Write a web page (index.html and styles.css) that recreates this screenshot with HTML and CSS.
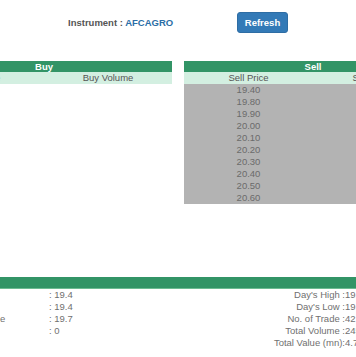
FILE: index.html
```html
<!DOCTYPE html>
<html lang="en">
<head>
    <meta charset="UTF-8">
    <title>Market Depth - AFCAGRO</title>
    <link rel="stylesheet" href="styles.css">
</head>
<body>
    <div class="page">
        <!-- instrument bar -->
        <div class="toolbar">
            <span class="instrument">Instrument : <span class="code">AFCAGRO</span></span>
            <button class="refresh" type="button">Refresh</button>
        </div>

        <!-- market depth -->
        <div class="books">
            <table class="book">
                <tr><th class="book-title" colspan="2">Buy</th></tr>
                <tr class="book-cols"><td>Buy Price</td><td>Buy Volume</td></tr>
            </table>

            <table class="book sell">
                <tr><th class="book-title" colspan="2">Sell</th></tr>
                <tr class="book-cols"><td>Sell Price</td><td>Sell Volume</td></tr>
                <tr><td>19.40</td><td>5000</td></tr>
                <tr><td>19.80</td><td>1200</td></tr>
                <tr><td>19.90</td><td>3500</td></tr>
                <tr><td>20.00</td><td>8000</td></tr>
                <tr><td>20.10</td><td>2500</td></tr>
                <tr><td>20.20</td><td>1000</td></tr>
                <tr><td>20.30</td><td>4000</td></tr>
                <tr><td>20.40</td><td>1500</td></tr>
                <tr><td>20.50</td><td>6000</td></tr>
                <tr><td>20.60</td><td>2000</td></tr>
            </table>
        </div>

        <!-- trade summary -->
        <div class="summary">
            <div class="summary-head"></div>
            <div class="summary-body">
                <table class="stats">
                    <tr><td class="label">Open Price</td><td>: 19.4</td></tr>
                    <tr><td class="label">Last Trade Price</td><td>: 19.4</td></tr>
                    <tr><td class="label">Previous Close Price</td><td>: 19.7</td></tr>
                    <tr><td class="label">Change</td><td>: 0</td></tr>
                </table>
                <table class="stats stats-right">
                    <tr><td class="label">Day's High :</td><td>19.90</td></tr>
                    <tr><td class="label">Day's Low :</td><td>19.30</td></tr>
                    <tr><td class="label">No. of Trade :</td><td>42</td></tr>
                    <tr><td class="label">Total Volume :</td><td>245120</td></tr>
                    <tr><td class="label">Total Value (mn):</td><td>4.77</td></tr>
                </table>
            </div>
        </div>
    </div>
</body>
</html>
```

FILE: styles.css
```css
* {
    margin: 0;
    padding: 0;
    box-sizing: border-box;
}

body {
    background: #fff;
    color: #666;
    font-family: "Liberation Sans", Arial, sans-serif;
    font-size: 9.5px;
    overflow: hidden;
}

.page {
    width: 526px;
    margin-left: -84px;
}

/* instrument bar */
.toolbar {
    display: flex;
    align-items: center;
    padding: 12px 0 0 152px;
    height: 33px;
}

.instrument {
    font-weight: bold;
    color: #555;
    width: 169px;
}

.instrument .code {
    color: #2b6ea6;
}

.refresh {
    width: 51px;
    height: 21px;
    background: #337ab7;
    border: 1px solid #2e6da4;
    border-radius: 3px;
    color: #fff;
    font-family: inherit;
    font-size: 9.5px;
    font-weight: bold;
}

/* market depth */
.books {
    display: flex;
    gap: 12px;
    align-items: flex-start;
    margin-top: 28px;
}

.book {
    width: 256px;
    border-collapse: collapse;
    table-layout: fixed;
}

.book.sell {
    width: 258px;
}

.book td,
.book th {
    text-align: center;
    height: 12px;
    line-height: 12px;
    padding: 0;
}

.book .book-title {
    height: 11px;
    line-height: 11px;
    background: #329466;
    color: #fff;
    font-weight: bold;
}

.book-cols td {
    background: #d3efe1;
    color: #555;
}

.sell tr td {
    background: #b3b3b3;
    color: #6b6b6b;
}

.sell tr.book-cols td {
    background: #d3efe1;
    color: #555;
}

/* trade summary */
.summary {
    margin-top: 73px;
}

.summary-head {
    height: 12px;
    background: #329466;
    border-bottom: 1px solid #6cbb92;
}

.summary-body {
    display: grid;
    grid-template-columns: 263px 263px;
    align-items: start;
}

.stats {
    border-collapse: collapse;
}

.stats td {
    height: 12px;
    line-height: 12px;
    padding: 0;
    white-space: nowrap;
    color: #707070;
}

.stats .label {
    width: 133px;
    padding-left: 1px;
}

.stats-right .label {
    width: 166px;
    padding-left: 0;
    text-align: right;
}
```
